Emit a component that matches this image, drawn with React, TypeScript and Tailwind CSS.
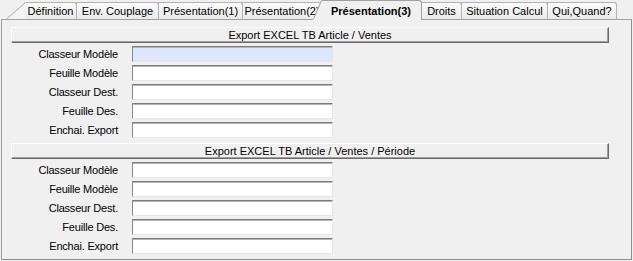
import React from 'react';

const font = "font-['Liberation_Sans',Arial,sans-serif]";

const tabs = [
  { label: 'Définition', w: 'w-[53px]' },
  { label: 'Env. Couplage', w: 'w-[83px]' },
  { label: 'Présentation(1)', w: 'w-[85px]' },
  { label: 'Présentation(2)', w: 'w-[80px]' },
  { label: 'Présentation(3)', w: 'w-[101px]', active: true },
  { label: 'Droits', w: 'w-[41px]' },
  { label: 'Situation Calcul', w: 'w-[87px]' },
  { label: 'Qui,Quand?', w: 'w-[70px]' },
];

const fields = ['Classeur Modèle', 'Feuille Modèle', 'Classeur Dest.', 'Feuille Des.', 'Enchai. Export'];

const Field = ({ label, focused }: { label: string; focused?: boolean }) => (
  <div className="flex items-center mt-[3px] h-[16px]">
    <div className="w-[107px] text-right leading-none text-black tracking-[-0.2px]">{label}</div>
    <div
      className={`ml-[14px] w-[201px] h-[16px] border border-t-[#7c7c7c] border-l-[#8a8a8a] border-b-[#e6e6e6] border-r-[#e6e6e6] shadow-[inset_0_1px_0_#b4b4b4] ${
        focused ? 'bg-[#dde6fb]' : 'bg-white'
      }`}
    />
  </div>
);

const Section = ({ title, first }: { title: string; first?: boolean }) => (
  <div className={first ? '' : 'mt-[5px]'}>
    <div className="w-[598px] h-[16px] flex items-center justify-center bg-[#f0f0f0] border border-t-white border-l-white border-b-[#696969] border-r-[#696969] shadow-[inset_-1px_-1px_0_#a0a0a0] leading-none text-black">
      {title}
    </div>
    {fields.map((f, i) => (
      <Field key={f} label={f} focused={first && i === 0} />
    ))}
  </div>
);

export default function App() {
  return (
    <div className={`w-[633px] h-[261px] bg-[#f0f0f0] overflow-hidden text-[11px] ${font}`}>
      {/* tab strip */}
      <div className="relative z-10 h-[19px] flex items-end pl-[25px]">
        <svg className="absolute left-[6px] top-[2px]" width="20" height="17" viewBox="0 0 20 17">
          <polygon points="0,17 19,0 20,0 20,17" fill="#f4f4f4" />
          <line x1="0.5" y1="17" x2="19.5" y2="0.5" stroke="#a9a9a9" strokeWidth="1" />
        </svg>
        {tabs.map((t) =>
          t.active ? (
            <div
              key={t.label}
              className={`relative ${t.w} h-[20px] -mb-px -ml-px flex items-center justify-center bg-[#f0f0f0] border border-b-0 border-[#a0a0a0] border-l-0 rounded-tr-[3px] font-bold text-black pt-[1px]`}
            >
              <svg className="absolute -left-[8px] top-[-1px]" width="9" height="20" viewBox="0 0 9 20">
                <polygon points="0,20 8,0 9,0 9,20" fill="#f0f0f0" />
                <line x1="0.5" y1="19" x2="8.5" y2="0.5" stroke="#a0a0a0" strokeWidth="1" />
              </svg>
              {t.label}
            </div>
          ) : (
            <div
              key={t.label}
              className={`${t.w} h-[17px] -ml-px flex items-center justify-center border border-b-0 border-[#b2b2b2] rounded-tr-[3px] bg-gradient-to-b from-[#fbfbfb] to-[#ebebeb] text-black whitespace-nowrap overflow-hidden`}
            >
              {t.label}
            </div>
          )
        )}
      </div>

      {/* panel */}
      <div className="ml-px w-[631px] h-[241px] border border-[#a0a0a0] border-r-[#8c8c8c] border-b-[#8c8c8c] pl-[9px] pt-[7px]">
        <Section title="Export EXCEL TB Article / Ventes" first />
        <Section title="Export EXCEL TB Article / Ventes / Période" />
      </div>
    </div>
  );
}
